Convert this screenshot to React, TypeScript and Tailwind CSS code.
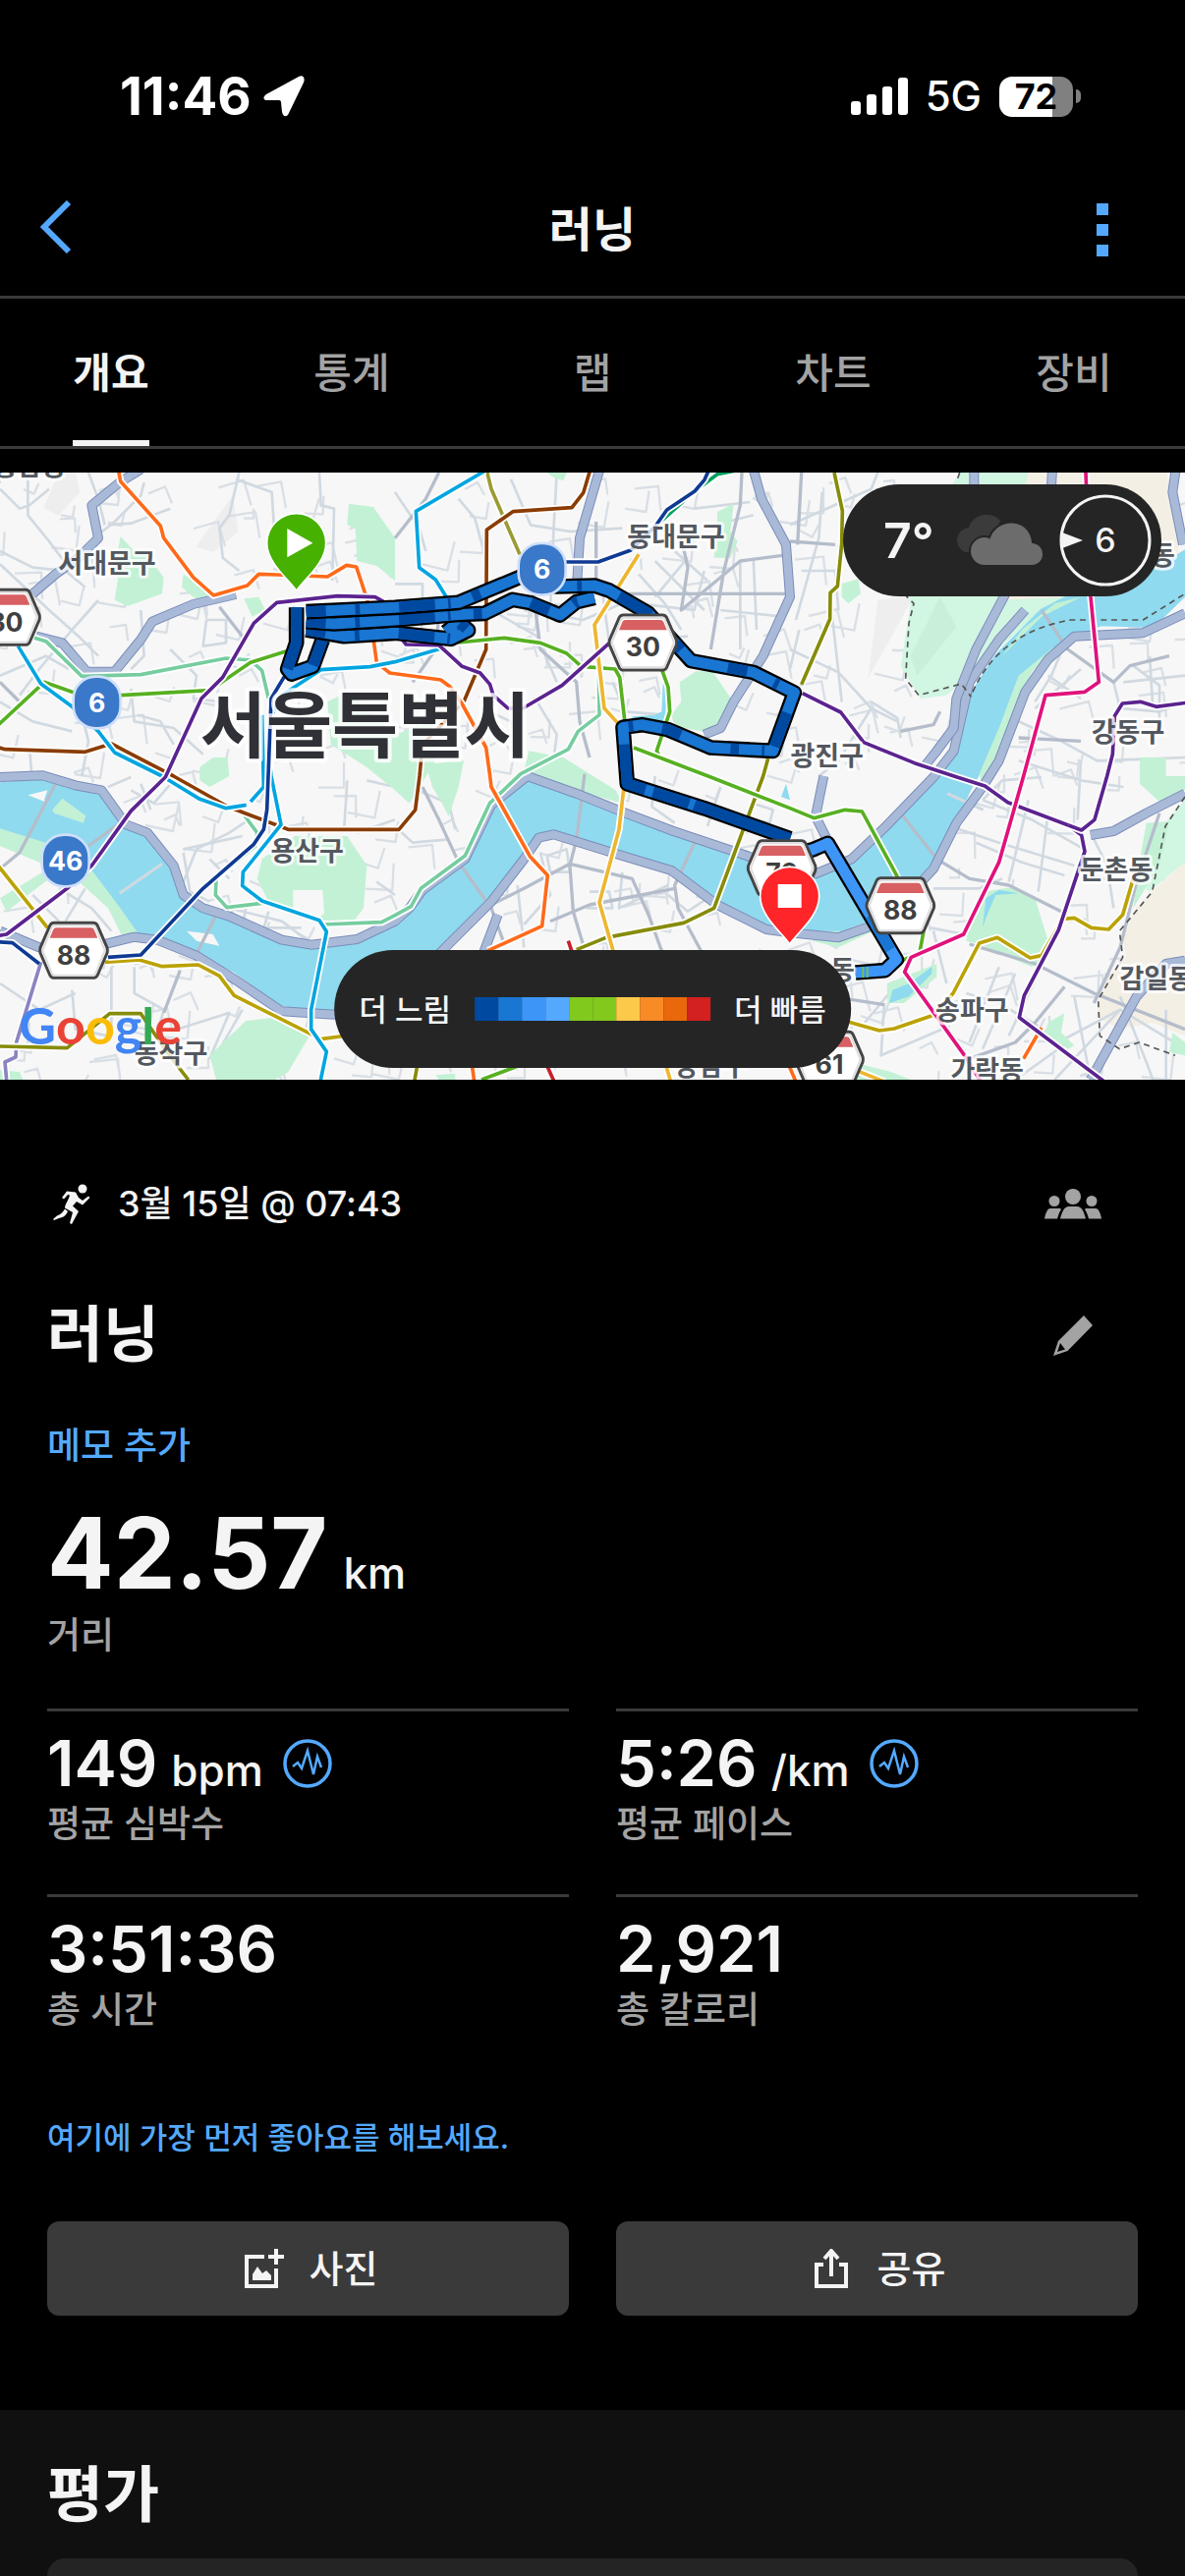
import React, { useState } from "react";

const tabs = ["개요", "통계", "랩", "차트", "장비"];

const paceColors = [
  "bg-[#0049a0]",
  "bg-[#1976d2]",
  "bg-[#3d96f7]",
  "bg-[#54a9ff]",
  "bg-[#82c91e]",
  "bg-[#82c91e]",
  "bg-[#fcc94b]",
  "bg-[#f98b26]",
  "bg-[#e9680c]",
  "bg-[#d32020]",
];

const stats = [
  { value: "149", unit: "bpm", label: "평균 심박수", chart: true },
  { value: "5:26", unit: "/km", label: "평균 페이스", chart: true },
  { value: "3:51:36", label: "총 시간" },
  { value: "2,921", label: "총 칼로리" },
];

// Map geometry. All points share the 3618 x 1854 canvas of the map's viewBox.

const river =
  "0,950 130,940 230,970 310,990 385,1085 450,1120 530,1210 560,1310 700,1370 860,1445 960,1455 1090,1435 1206,1375 1256,1330 1290,1280 1420,1180 1500,1020 1620,935 1760,985 1910,1040 2056,1100 2236,1160 2412,1215 2500,1225 2600,1190 2715,1080 2850,930 2912,850 2970,670 3040,560 3120,480 3180,420 3262,378 3500,310 3618,240 3618,375 3520,470 3360,465 3220,530 3110,620 3090,690 3050,780 3010,880 2960,970 2920,1060 2890,1130 2850,1210 2740,1320 2640,1370 2560,1400 2412,1405 2340,1390 2190,1320 2060,1220 1900,1170 1690,1105 1645,1120 1600,1180 1500,1300 1330,1470 1200,1600 1020,1645 960,1638 860,1625 720,1525 600,1465 480,1415 420,1405 365,1327 290,1227 240,1167 130,1127 0,1087";

const parks = [
  "368,195 410,240 440,240 500,320 495,370 390,408 350,390 360,325 350,290",
  "560,310 630,360 640,400 590,380 555,350",
  "745,385 790,380 810,420 770,440",
  "1065,95 1140,105 1206,200 1206,330 1150,285 1090,270 1085,170 1060,160",
  "610,900 650,870 695,870 700,927 640,960 610,940",
  "1000,700 1060,670 1100,700 1206,800 1320,760 1330,880 1250,1010 1206,970 1120,900 1010,830",
  "1300,890 1416,880 1400,960 1370,1050 1350,1010 1320,960",
  "800,1180 900,1110 1060,1110 1120,1200 1110,1330 1080,1370 960,1375 820,1310 785,1240",
  "640,1780 750,1675 830,1665 945,1720 880,1830 840,1854 660,1854",
  "160,1030 190,995 262,1048 255,1070 165,1040",
  "0,1087 130,1127 240,1167 290,1227 365,1327 420,1405 380,1430 330,1330 220,1230 120,1190 0,1140",
  "0,1300 130,1220 150,1240 20,1340",
  "2075,640 2125,607 2175,607 2232,690 2226,740 2170,795 2060,775 2050,740 2080,700",
  "2190,120 2240,95 2230,180 2252,210 2230,260 2180,260 2190,180",
  "2570,340 2620,325 2628,370 2590,400 2570,380",
  "1670,0 1730,0 1720,25 1690,15",
  "1596,927 1615,850 1720,870 1880,970 1900,1010 1720,960",
  "2960,1370 3000,1280 3100,1265 3160,1300 3200,1430 3170,1510 2990,1440 2950,1430",
  "3000,1440 3170,1490 3150,1510 3010,1450",
  "2708,1560 2860,1500 2860,1540 2760,1620 2710,1620",
  "3200,1680 3250,1650 3240,1710 3280,1750 3260,1760 3190,1710",
  "3480,870 3560,870 3560,927 3618,927 3618,970 3540,1005 3480,950",
  "3500,1070 3570,1065 3540,1200 3460,1330 3470,1240",
  "3580,1710 3618,1740 3618,1780 3570,1770",
  "2480,1400 2600,1400 2700,1360 2690,1390 2560,1450 2480,1430",
  "2600,1800 2720,1830 2780,1854 2610,1854",
  "0,1825 60,1830 70,1854 0,1854",
  "1330,1840 1390,1835 1390,1854 1340,1854",
  "3120,480 3220,400 3300,380 3180,440 3060,560",
  "3110,620 3220,530 3150,610 3040,900 3000,960 2990,920 3050,780",
];

const highways = [
  "430,-10 365,30 280,100 300,200 240,260 170,310 100,370",
  "110,500 190,520 265,608 350,608 430,510 465,455 590,402 720,372",
  "0,930 130,925 230,955 310,970 385,1075 450,1100 530,1200 560,1290 620,1330 700,1355 860,1427 950,1442 1090,1425 1206,1370 1250,1330 1290,1275 1420,1180 1500,1015 1610,927 1760,980 1910,1040 2056,1095 2236,1155 2412,1215 2490,1225 2600,1180 2700,1085 2850,930 2912,850 2960,640 3050,510 3130,420",
  "0,1400 120,1450 280,1450 410,1418 480,1427 600,1475 720,1550 860,1645 1020,1655 1160,1600 1330,1480 1500,1310 1600,1180 1645,1115 1690,1105 1900,1170 2050,1215 2190,1320 2340,1395 2412,1405 2560,1420 2700,1370 2850,1210 2880,1150 2920,1070 3000,960 3050,880 3130,670 3200,570 3280,500 3490,490 3618,430",
  "1831,-10 1770,200 1762,330",
  "2300,-10 2325,80 2400,220 2412,380 2330,560 2240,700 2200,780 2150,800",
  "3070,370 2980,540 2920,690 2912,780 2860,850 2820,900",
  "2974,-10 2974,40",
  "3213,-10 3210,40",
  "3590,-10 3580,60 3612,220",
  "3618,980 3500,1040 3400,1095 3330,1107",
  "3618,1490 3560,1500 3470,1600 3330,1854",
  "1520,1350 1475,1470",
  "2515,927 2490,1050 2530,1130",
];

const arterials = [
  "0,640 50,690 60,700",
  "670,410 740,500",
  "170,950 60,1160 0,1210",
  "270,1140 380,1060",
  "660,1350 600,1470",
  "1785,920 1760,1120 1740,1200 1750,1340 1780,1440",
  "1290,960 1340,1060 1400,1190 1500,1330 1540,1440",
  "2130,1110 2060,1260 2070,1330 2140,1460",
  "1500,1320 1600,1270 1740,1195 1930,1240 1980,1350 2020,1460",
  "1680,1370 1800,1320 2060,1270",
  "3180,420 3260,540 3400,640 3450,590 3570,560",
  "2750,1040 2860,1180 2960,1240 3080,1260 3240,1340",
  "2960,1440 3160,1500 3340,1590 3618,1700",
  "3540,1040 3470,1250 3420,1450 3340,1620",
  "3250,1570 3160,1680 3100,1740 2960,1790",
  "550,1520 500,1650",
  "1206,200 1300,80 1340,0",
  "1620,300 1650,540 1760,640 1770,760 1800,870",
  "1260,640 1330,540 1340,440",
  "1820,150 1820,340",
  "1900,370 2060,370 2220,370 2400,370",
  "2080,200 2100,290 2080,420 2260,270 2412,250",
  "2265,0 2260,100 2210,300 2170,540",
  "2412,210 2550,220",
  "2447,0 2435,220",
  "3110,810 3300,820",
  "2750,790 2850,770 2870,730",
  "2540,1600 2700,1625",
];

const streets = [
  "0,50 60,110 90,100 150,50",
  "85,0 85,130 150,210 210,290",
  "0,240 100,290 200,300 260,350",
  "440,30 430,70 350,150 300,190",
  "520,110 400,155 330,160",
  "270,0 300,80 320,160",
  "730,0 700,130 670,170 680,260 730,300",
  "720,20 830,60 840,220",
  "975,0 980,100 1020,110 1015,330",
  "0,280 150,420 240,500 300,560",
  "300,390 220,480 120,600 60,680",
  "0,620 140,560 210,600",
  "430,420 440,560 400,600",
  "630,450 690,450 690,520 620,530 630,450",
  "520,540 600,620 590,690 680,700",
  "240,700 270,820 250,927",
  "0,700 100,760 220,790",
  "90,840 100,960 200,1000",
  "400,660 410,760 530,780 620,860",
  "530,830 490,760 420,740",
  "1206,340 1290,340 1290,430",
  "1206,60 1280,170 1300,240",
  "1400,80 1450,140 1480,250",
  "1560,20 1620,160 1740,180 1900,170",
  "1700,0 1690,180 1680,420",
  "1600,420 1780,450 1900,400",
  "1500,420 1640,500 1700,640",
  "1840,370 1860,520 2100,500",
  "1950,400 2120,420 2150,300",
  "2000,270 2060,330 2150,420",
  "1950,310 2030,400 2080,480",
  "2060,240 2160,330",
  "2000,380 2100,260",
  "2260,270 2260,540",
  "2300,260 2310,480",
  "2200,420 2390,440",
  "2180,160 2300,130",
  "2120,110 2290,90",
  "1870,640 1910,730 2030,740",
  "1470,720 1560,760 1590,850",
  "1640,700 1700,800 1690,880",
  "1250,960 1370,1010 1390,1090",
  "1206,1080 1260,1130 1370,1120",
  "1670,1170 1730,1150 1740,1220 1680,1220 1670,1170",
  "1650,1160 1680,1290 1600,1380",
  "1580,1260 1600,1450",
  "1800,1280 1860,1280 1870,1330 1790,1330",
  "1900,1220 1890,1330 2040,1260",
  "2040,1290 2100,1340 2160,1300",
  "2000,927 1990,1020 2060,1070",
  "2200,960 2160,1080",
  "2300,1010 2360,1030 2350,1070 2300,1060",
  "2447,300 2550,300 2560,420",
  "2412,160 2660,50 2680,0",
  "2412,540 2560,610 2660,720 2740,760",
  "2540,430 2570,700",
  "2430,450 2500,200 2510,60",
  "2660,720 2560,880 2500,927",
  "2660,700 2740,750 2750,810",
  "2412,600 2440,480",
  "3260,500 3210,620 3160,700",
  "3200,620 3300,690",
  "3400,640 3420,720 3540,730 3618,700",
  "3460,590 3540,650 3540,760",
  "3510,560 3520,720",
  "3618,620 3430,640",
  "3110,760 3240,820 3350,880 3618,870",
  "3160,720 3300,600",
  "3110,880 3300,940 3430,960",
  "3300,880 3290,1060",
  "2900,1080 3050,1130 3280,1200",
  "3000,1000 3150,1060 3310,1150",
  "2980,1130 3120,1190 3250,1230",
  "3140,1000 3080,1250",
  "3200,1040 3170,1280",
  "2850,1270 2990,1270 3060,1240",
  "2840,1390 3000,1420",
  "3000,1000 3060,940 3180,930",
  "3330,1100 3380,1200 3400,1330",
  "2640,1680 2740,1560 2850,1530",
  "2850,1400 2890,1560",
  "2950,1590 3050,1620 3170,1690",
  "3050,1510 2960,1740",
  "3100,1530 3000,1760",
  "3160,1550 3080,1720",
  "2700,1620 2690,1780 2900,1690",
  "3280,1600 3330,1854",
  "3230,1740 3420,1640",
  "3220,1854 3420,1640 3618,1760",
  "3100,1854 3260,1740",
  "3420,1600 3500,1800 3520,1854",
  "3560,1640 3560,1854",
  "220,1580 230,1700 330,1720",
  "340,1510 340,1700",
  "410,1510 410,1590 500,1640 470,1750",
  "0,1560 120,1640 230,1590",
  "540,1700 700,1650 640,1790",
  "740,1640 660,1780",
  "560,1250 600,1150 700,1100 760,1060",
  "430,950 460,1030",
  "400,970 470,1010 530,940",
  "330,960 400,930",
  "560,1150 740,1110",
  "640,1180 700,1240",
  "560,1160 580,1280 640,1310",
  "640,1340 780,1390 920,1390",
  "700,1330 860,1370 940,1430",
  "750,1330 740,1390",
  "820,1340 800,1410",
  "180,1270 280,1330 340,1400",
  "100,1290 180,1370",
  "130,1330 220,1240",
  "200,1370 260,1270",
  "1050,1100 1060,940",
  "1120,940 1206,960",
  "1206,1060 1090,1100",
  "1150,1250 1206,1290",
];

// Short dead-end lanes scattered under everything else on the map.
const lanes = Array.from({ length: 420 }, (_, i) => {
  const x = (i * 977) % 3618;
  const y = (i * 613 + ((i * i) % 97) * 7) % 1854;
  const long = 30 + ((i * 37) % 60);
  const tilt = (i * 13) % 24;
  return i % 2
    ? `M${x} ${y}l${long} ${-tilt}l${tilt} ${long}`
    : `M${x} ${y}l${-tilt} ${long}l${-long} ${-tilt}`;
}).join("");

const subway: [string, string][] = [
  ["#76cda0", "105,505 140,515 250,622 430,617 690,567 765,573 800,605 820,690"],
  ["#76cda0", "745,1045 785,1100 780,1140 660,1240 658,1290 693,1328 800,1315"],
  [
    "#76cda0",
    "985,1380 1165,1373 1206,1352 1255,1325 1285,1270 1420,1170 1495,1010 1590,920 1735,845 1765,790 1830,740 1828,610",
  ],
  ["#8a84c0", "125,1495 50,1740 48,1785 15,1800 20,1854"],
  ["#bba205", "-10,1195 145,1390"],
  ["#bba205", "320,1495 425,1488 495,1508 605,1503 670,1537 715,1597 980,1730 1060,1719"],
  [
    "#bba205",
    "2570,1672 2685,1704 2730,1698 2850,1657 2910,1590 2990,1437 3045,1420 3145,1482 3180,1475 3245,1363 3280,1360 3332,1390 3385,1395 3428,1350 3460,1240",
  ],
  ["#868c0a", "0,1752 205,1757 335,1652 430,1652 510,1770 575,1854"],
  ["#9b9b35", "1485,-10 1500,50 1587,250"],
  ["#868c0a", "2547,0 2572,117 2570,217 2557,347 2535,367 2534,447 2447,647"],
  ["#868c0a", "2345,873 2330,927 2180,1330 2088,1375 1850,1420 1760,1457"],
  ["#868c0a", "1276,1800 1265,1860"],
  [
    "#8a3c02",
    "-10,838 15,845 260,853 340,828 530,927 695,1020 880,1090 1218,1090 1268,1030 1281,927 1290,830 1416,700 1484,540 1486,175 1566,119 1746,107 1781,62 1801,-5",
  ],
  ["#00a060", "2240,-5 2190,5 2121,57 2000,165"],
  ["#0f3a93", "2163,-5 2151,22 2121,57 2036,114 2000,165 1926,237 1826,273 1720,273"],
  ["#57b021", "-10,775 135,640 220,670 370,680 640,665 765,580 875,545"],
  ["#57b021", "1400,519 1540,505 1650,520 1730,552 1775,592 1878,600 1892,625 1910,780"],
  ["#57b021", "2020,600 2040,655 2045,730 2005,850 2018,875"],
  [
    "#57b021",
    "1935,840 2170,930 2412,1025 2485,1055 2580,1030 2632,1035 2735,1225 2820,1400 2808,1465 2755,1490",
  ],
  ["#57b021", "1470,1854 1600,1805"],
  ["#eeb630", "1950,250 1815,465 1845,720 1895,775"],
  ["#eeb630", "1905,960 1890,1090 1830,1313 1872,1460 1885,1520"],
  ["#eeb630", "2030,1800 2048,1860"],
  ["#eeb630", "2600,1820 2700,1860"],
  [
    "#ff6a1a",
    "362,-5 368,27 490,163 500,200 590,320 652,375 755,345 790,310 845,312 1000,318 1058,283 1088,288 1125,400 1150,580 1190,612 1346,633 1375,655 1410,705 1484,840 1496,927 1500,960 1618,1172 1672,1230 1655,1385 1490,1460",
  ],
  ["#ff6a1a", "1440,1800 1448,1860"],
  ["#ff6a1a", "3180,1695 3125,1790"],
  ["#ff6a1a", "2400,1790 2430,1860"],
  ["#c8202c", "1735,1430 1745,1460"],
  ["#c8202c", "1665,1800 1692,1860"],
  [
    "#00a5e0",
    "1480,-5 1270,118 1280,290 1330,327 1375,400 1355,535 1206,578 1130,593 980,602 860,680 820,760 825,900 828,927 858,1075 742,1220 740,1262 800,1308 975,1367 997,1402 950,1640 950,1700 997,1768 978,1860",
  ],
  ["#00a5e0", "55,530 125,645 220,715 300,790 350,855 495,927 610,997 690,1025 752,1015"],
  ["#00a5e0", "765,1005 805,960 800,740"],
  ["#0f3a93", "870,620 828,690 815,1030 805,1090 775,1135 620,1270 430,1473 330,1480"],
  ["#0f3a93", "120,1500 38,1436 -10,1433"],
  [
    "#5b238f",
    "-10,1415 20,1410 205,1270 280,1200 400,1033 505,930 615,690 680,625 775,460 845,397 1030,377 1145,380 1200,410 1220,500 1240,525 1340,527 1411,592 1466,612 1496,647 1506,680 1551,720 1596,720 1716,650 1861,520",
  ],
  [
    "#5b238f",
    "2450,674 2567,732 2637,824 2792,887 2922,930 3007,957 3077,1007 3262,1077 3302,1107 3312,1157 3292,1217 3232,1397 3127,1597 3112,1664 3372,1860",
  ],
  ["#5b238f", "3262,1077 3302,1092 3342,1060 3380,927 3397,860 3403,743 3427,705 3482,700 3530,715 3630,702"],
  ["#e0127c", "3313,-5 3315,0 3330,380 3355,640 3312,670 3192,680 3125,927 3050,1190 2942,1410 2782,1480 2762,1525 2945,1780 2995,1860"],
];

const route = [
  "905,412 905,520 878,600 890,615 955,592 985,510",
  "935,480 1050,500 1206,490 1376,508 1430,482 1400,455 1362,487",
  "935,455 1020,462 1206,450 1390,434 1480,430 1565,388 1620,398 1710,435 1760,395 1815,382",
  "935,425 1206,412 1400,397 1590,318 1700,348 1815,345 1860,360 1980,430 2060,520 2110,575 2300,610 2425,672 2360,850 2170,840 2040,785 1960,770 1902,778 1915,950 2150,1025 2412,1118",
];
const fastRoute = "2440,1160 2480,1152 2527,1132 2737,1487 2702,1520 2612,1527";

const districts: [string, number, number][] = [
  ["서대문구", 327, 307],
  ["동대문구", 2064, 225],
  ["광진구", 2525, 893],
  ["강동구", 3444, 823],
  ["용산구", 938, 1184],
  ["둔촌동", 3408, 1242],
  ["송파구", 2968, 1672],
  ["감일동", 3530, 1575],
  ["가락동", 3014, 1854],
  ["동작구", 522, 1802],
  ["강남구", 2170, 1842],
];

const StatusBar = () => (
  <div className="flex h-[167px] items-center justify-between pl-[122px] pr-[106px] pt-[29px]">
    <div className="flex items-center gap-3">
      <span className="text-[53px] font-bold leading-none text-white">11:46</span>
      <svg viewBox="0 0 42 42" className="size-[42px]" fill="#fff">
        <path d="M36 1 3 19C-1 22 0 25 4 25H16Q18 25 18 27L19 37C20 42 24 43 26 38L41 7C43 2 40-1 36 1Z" />
      </svg>
    </div>
    <div className="flex items-center gap-[18px]">
      <svg viewBox="0 0 58 38" className="h-[38px] w-[58px]" fill="#fff">
        <rect x="0" y="24" width="10" height="14" rx="3" />
        <rect x="16" y="17" width="10" height="21" rx="3" />
        <rect x="32" y="9" width="10" height="29" rx="3" />
        <rect x="48" y="0" width="10" height="38" rx="3" />
      </svg>
      <span className="text-[42px] font-medium leading-none text-white">5G</span>
      <div className="flex items-center gap-[3px]">
        <div className="flex h-[41px] w-[75px] items-center justify-center rounded-[13px] bg-linear-to-r from-white from-72% to-[#808080] to-72% text-[36px] font-bold leading-none text-black">
          72
        </div>
        <div className="h-[14px] w-[5px] rounded-r-full bg-[#808080]" />
      </div>
    </div>
  </div>
);

const NavBar = () => (
  <header className="flex h-[137px] items-center justify-between border-b-[3px] border-[#3a3a3a] pl-10 pr-[72px]">
    <button aria-label="뒤로" className="flex w-[50px] justify-start pb-1.5">
      <svg viewBox="0 0 34 54" className="h-[54px] w-[34px]" fill="none" stroke="#54a9ff" strokeWidth="6">
        <path d="M30 2 5 27l25 25" />
      </svg>
    </button>
    <h1 className="pl-8 text-[48px] font-semibold leading-none text-[#f4f4f4]">러닝</h1>
    <button aria-label="더보기" className="flex w-[50px] flex-col items-end gap-[9px] pr-1.5">
      <span className="size-3 bg-[#54a9ff]" />
      <span className="size-3 bg-[#54a9ff]" />
      <span className="size-3 bg-[#54a9ff]" />
    </button>
  </header>
);

const TabBar = () => {
  const [active, setActive] = useState(tabs[0]);

  return (
    <nav className="flex h-[153px] justify-between border-b-[3px] border-[#3a3a3a] px-[74px]">
      {tabs.map((tab) => (
        <button
          key={tab}
          onClick={() => setActive(tab)}
          className={`w-[78px] border-b-[6px] pt-2 whitespace-nowrap text-[42px] leading-none ${
            tab === active
              ? "border-[#f4f4f4] font-semibold text-[#f4f4f4]"
              : "border-transparent font-medium text-[#a3a3a3]"
          }`}
        >
          {tab}
        </button>
      ))}
    </nav>
  );
};

const HexShield = ({ x, y, label }: { x: number; y: number; label: string }) => (
  <g transform={`translate(${x} ${y})`}>
    <path
      d="M-60-84H60Q68-84 72-77L102-8Q104 0 102 8L72 77Q68 84 60 84H-60Q-68 84-72 77L-102 8Q-104 0-102-8L-72-77Q-68-84-60-84Z"
      fill="#fff"
      stroke="#454545"
      strokeWidth="9"
    />
    <path d="M-60-76H60L66-72 95 0 66 72 60 76H-60L-66 72-95 0-66-72Z" fill="none" stroke="#dedede" strokeWidth="6" />
    <path d="M-54-69H54Q60-69 63-62L73-38H-73L-63-62Q-60-69-54-69Z" fill="#d85f62" />
    <text y="43" textAnchor="middle" fontSize="80" fontWeight="700" fill="#404040">
      {label}
    </text>
  </g>
);

const RoundShield = ({ x, y, label }: { x: number; y: number; label: string }) => (
  <g transform={`translate(${x} ${y})`}>
    <rect x="-72" y="-79" width="144" height="158" rx="68" fill="#3a78c9" stroke="#cfdffb" strokeWidth="8" />
    <text y="29" textAnchor="middle" fontSize="80" fontWeight="700" fill="#fff">
      {label}
    </text>
  </g>
);

const Pin = ({ x, y, color, children }: { x: number; y: number; color: string; children: React.ReactNode }) => (
  <g transform={`translate(${x} ${y})`}>
    <path
      d="M0 146C-20 114-90 62-90 0A90 90 0 0 1 90 0C90 62 20 114 0 146Z"
      fill={color}
      stroke="#fff"
      strokeWidth="5"
    />
    {children}
  </g>
);

const MapDrawing = () => (
  <svg viewBox="0 0 3618 1854" className="block w-full" fill="none" strokeLinejoin="round">
    <rect width="3618" height="1854" fill="#f7f7f7" />
    <path
      d="M180 0h50l14 60-66 72-45-25ZM710 70l18 110-75 62-55-14ZM2680 390l60-10 60-20-150 270Z"
      fill="#eeeeee"
    />
    <path d={lanes} stroke="#d9dfe5" strokeWidth="7" />
    <path
      d="M2930 0h370l0 60 100 300-210 50-220 200-80 70-80 10-60-100 30-190-20-90 100-200Z"
      fill="#d1f6e2"
    />
    <path d="m2870 380 50 90-120 150-20-60Z" fill="#c9eed9" />
    <path d="M3140 0h420l20 60 20 200-150 110-400 20Z" fill="#f4efe4" />
    <path d="m3618 1190-90 80-60 60-40 90 10 60-70 80-20 100 70 40 100-20 100 40Z" fill="#f4efe4" />
    <path d="m3618 1000-70 80-60 180 20 20 110-90Z" fill="#d1f6e2" />
    {streets.map((points) => (
      <polyline key={points} points={points} stroke="#d1d9e1" strokeWidth="8" />
    ))}
    <polygon points={river} fill="#8fdaee" stroke="#8fdaee" strokeWidth="8" />
    {parks.map((points) => (
      <polygon key={points} points={points} fill="#c3f1d5" />
    ))}
    <path d="M895 1275h90l5 70-30 30-65-45Z" fill="#f7f7f7" />
    <path d="m85 985 60-15-10 30 15 10ZM570 1400l80 10 20 35-70-15Z" fill="#f7f7f7" />
    <path
      d="m1930 745 70-5 20-10 5-110 20 20-20 140-90 5ZM3000 1390l10-90 40-25 60 10-70 5-30 70ZM2725 1580l50-20 70-50 0 20-70 70-60 20ZM2385 990l15-40 12 50Z"
      fill="#8fdaee"
    />
    {arterials.map((points) => (
      <polyline key={points} points={points} stroke="#b5bdcb" strokeWidth="10" />
    ))}
    <path d="M495 1195 365 1285M740 1010l-60 20M2892 980l110 50" stroke="#d1d9e1" strokeWidth="9" />
    {highways.map((points) => (
      <g key={points}>
        <polyline points={points} stroke="#7b8cba" strokeWidth="30" />
        <polyline points={points} stroke="#a9bad8" strokeWidth="24" />
      </g>
    ))}
    <path
      d="M2970 670c60-140 180-200 300-220h220l128-80M2930 0l-10 30M2760 370l30 30-15 60-10 170 40 50 130-35 30 40M3618 990l-60 90-40 200-100 120 10 80-75 130 5 110 60 40 60-20 110 40"
      stroke="#555"
      strokeWidth="5"
      strokeDasharray="18 14"
    />
    {subway.map(([color, points]) => (
      <g key={points}>
        <polyline points={points} stroke="#fff" strokeWidth="22" />
        <polyline points={points} stroke={color} strokeWidth="11" />
      </g>
    ))}

    {/* Translucent halo so lines fade behind the place names. */}
    <g textAnchor="middle" stroke="#fff" strokeOpacity="0.8" paintOrder="stroke">
      <g fontSize="81" fontWeight="600" fill="#53585e" strokeWidth="18">
        {districts.map(([name, x, y]) => (
          <text key={name} x={x} y={y}>
            {name}
          </text>
        ))}
        <text x="3550" y="282">동</text>
        <text x="90" y="10">홍남동</text>
      </g>
      <text x="1115" y="852" fontSize="219" fontWeight="700" fill="#2f3136" strokeWidth="24">
        서울특별시
      </text>
    </g>

    <HexShield x={18} y={442} label="30" />
    <HexShield x={225} y={1459} label="88" />
    <HexShield x={2532} y={1792} label="61" />
    <RoundShield x={296} y={702} label="6" />
    <RoundShield x={200} y={1185} label="46" />

    {route.map((points) => (
      <g key={points}>
        <polyline points={points} stroke="#000" strokeWidth="47" />
        <polyline points={points} stroke="#1976d2" strokeWidth="33" />
        <polyline
          points={points}
          stroke="#0049a0"
          strokeWidth="33"
          strokeDasharray="60 90 14 120 110 40 8 70 26 160"
        />
      </g>
    ))}
    <polyline points="905,412 905,520 878,600" stroke="#0049a0" strokeWidth="33" />
    <polyline points="1906,830 1915,950 2150,1025 2412,1118" stroke="#0049a0" strokeWidth="33" />
    <path d="m1970 969 24 7M2104 1010l16 6" stroke="#1976d2" strokeWidth="33" />
    <polyline points={fastRoute} stroke="#000" strokeWidth="47" />
    <polyline points={fastRoute} stroke="#3d96f7" strokeWidth="33" />
    <path d="m2657 1352 62 105" stroke="#1976d2" strokeWidth="33" />
    <path d="M2635 1510v33M2648 1509v33" stroke="#82c91e" strokeWidth="5" />
    <text
      x="2572"
      y="1548"
      textAnchor="middle"
      fontSize="81"
      fontWeight="600"
      fill="#53585e"
      stroke="#fff"
      strokeOpacity="0.6"
      strokeWidth="14"
      paintOrder="stroke"
    >
      동
    </text>

    <HexShield x={1963} y={519} label="30" />
    <HexShield x={2387} y={1208} label="70" />
    <HexShield x={2749} y={1322} label="88" />
    <RoundShield x={1655} y={295} label="6" />

    <Pin x={905} y={215} color="#46b100">
      <path d="M-28-44 50 0l-78 44Z" fill="#fff" />
    </Pin>
    <Pin x={2411} y={1294} color="#ff2529">
      <path d="M-36-37h72v72h-72Z" fill="#fff" />
    </Pin>

    <text x="58" y="1745" fontSize="156" fontFamily="Lato, sans-serif" fontWeight="700">
      <tspan fill="#4285f4">G</tspan>
      <tspan fill="#ea4335">o</tspan>
      <tspan fill="#fbbc05">o</tspan>
      <tspan fill="#4285f4">g</tspan>
      <tspan fill="#34a853">l</tspan>
      <tspan fill="#ea4335">e</tspan>
    </text>
  </svg>
);

const WeatherBadge = () => (
  <div className="absolute right-[24px] top-[12px] flex h-[114px] items-center rounded-full bg-[#252525] pl-[41px] pr-[10px] text-[#f4f4f4]">
    <span className="w-[69px] text-[50px] font-semibold leading-none">7°</span>
    <svg viewBox="0 0 94 53" className="h-[53px] w-[94px]">
      <path d="M14 38a13 13 0 0 1 4-25C22-2 42-4 50 6L38 38Z" fill="#3b3b3b" />
      <path
        d="M34 52a15 15 0 0 1 0-30c2 0 4 0 5 1 7-21 41-22 44 5a12 12 0 0 1-2 24Z"
        fill="#6c6c6c"
        stroke="#252525"
        strokeWidth="2"
      />
    </svg>
    <div className="ml-[16px] flex size-[94px] items-center justify-center">
      <svg viewBox="0 0 94 94" className="absolute size-[94px]">
        <circle cx="47" cy="47" r="45" fill="none" stroke="#f4f4f4" strokeWidth="3" />
        <path d="M3 39 24 47 3 55Z" fill="#f4f4f4" />
      </svg>
      <span className="text-[34px] font-medium leading-none">6</span>
    </div>
  </div>
);

const PaceLegend = () => (
  <div className="absolute bottom-[12px] left-1/2 flex h-[120px] -translate-x-1/2 items-center gap-[24px] whitespace-nowrap rounded-full bg-[#252525] px-[25px] text-[31px] font-medium leading-none text-[#f4f4f4]">
    <span>더 느림</span>
    <div className="flex">
      {paceColors.map((color, i) => (
        <span key={i} className={`h-6 w-6 ${color}`} />
      ))}
    </div>
    <span>더 빠름</span>
  </div>
);

const ActivityMap = () => (
  <section className="relative mt-6 overflow-hidden">
    <MapDrawing />
    <WeatherBadge />
    <PaceLegend />
  </section>
);

const RunnerIcon = () => (
  <svg viewBox="0 0 40 42" className="h-[42px] w-[40px]" fill="#f4f4f4">
    <circle cx="30" cy="6" r="4.500" />
    <path d="M9 15 14 8.500 23 9.500 26 15 30 18 36 13.500 37.500 15 30 22.500 24 19 20 23.500 26 29 19 42 17 41 20 30 12 25.500C12 22 16 17 17 12.500L15 12 11 16.500Z" />
    <path d="M12 26.500 15 29C13 33 11 35 6 36L1 38 0 37 4 33.500C8 32 10 30 12 26.500Z" />
  </svg>
);

const PeopleIcon = () => (
  <svg viewBox="0 0 58 31" className="h-[31px] w-[58px]" fill="#a3a3a3">
    <circle cx="29" cy="8" r="8" />
    <circle cx="10" cy="12.500" r="5.500" />
    <circle cx="48" cy="12.500" r="5.500" />
    <path d="M16 30.500C18 23 20 18 25 18h8c5 0 7 5 9 12.500ZM0 30.500C1 25 3 20 6 20h10l1 1c-2 3-3 6-4 9.500ZM58 30.500C57 25 55 20 52 20H42l-1 1c2 3 3 6 4 9.500Z" />
  </svg>
);

const PencilIcon = () => (
  <svg viewBox="0 0 40 41" className="h-[41px] w-[40px]" fill="#a3a3a3">
    <path fillRule="evenodd" d="M31 0 40 10 14.500 36 0 41 5 26ZM7 28 4 37 12 34.500Z" />
  </svg>
);

const ChartIcon = () => (
  <svg viewBox="0 0 50 50" className="size-[50px]" fill="none" stroke="#54a9ff">
    <circle cx="25" cy="25" r="23" strokeWidth="3.500" />
    <path d="m10 28 5-4 4 6 6-18 6 24 4-18 4 11" strokeWidth="2.500" />
  </svg>
);

const PhotoIcon = () => (
  <svg viewBox="0 0 40 40" className="size-10" fill="none" stroke="#f4f4f4" strokeWidth="4">
    <path d="M20 8H2v30h30V20" />
    <path d="M32 0v16M24 8h16" />
    <path d="m8 32V26l5-8 5 7 4-3 5 5v5Z" fill="#f4f4f4" stroke="none" />
  </svg>
);

const ShareIcon = () => (
  <svg viewBox="0 0 34 40" className="h-10 w-[34px]" fill="none" stroke="#f4f4f4" strokeWidth="4">
    <path d="M9 16H2v22h30V16h-7" />
    <path d="M17 28V5" />
    <path d="m10 10 7-8 7 8" />
  </svg>
);

const StatCell = ({ value, unit, label, chart }: (typeof stats)[number]) => (
  <div className="h-[189px] border-t-[3px] border-[#3a3a3a] pt-[21px]">
    <div className="flex h-16 items-center gap-[20px]">
      <p className="text-[65px] font-semibold leading-[64px] text-[#f4f4f4]">
        {value}
        {unit && <span className="pl-[14px] text-[44px] font-medium leading-none">{unit}</span>}
      </p>
      {chart && (
        <button aria-label={`${label} 차트`}>
          <ChartIcon />
        </button>
      )}
    </div>
    <p className="text-[37px] font-medium leading-[60px] text-[#a3a3a3]">{label}</p>
  </div>
);

const Summary = () => (
  <main className="px-12 pt-[66px]">
    <div className="flex h-[120px] items-center justify-between pl-1.5 pr-[37px]">
      <div className="flex items-center gap-[26px]">
        <RunnerIcon />
        <p className="text-[36px] font-medium leading-none text-[#f4f4f4]">3월 15일 @ 07:43</p>
      </div>
      <button aria-label="공개 설정">
        <PeopleIcon />
      </button>
    </div>
    <div className="mt-4 flex h-[116px] items-center justify-between pr-[46px]">
      <h2 className="text-[62px] font-semibold leading-none text-[#f4f4f4]">러닝</h2>
      <button aria-label="이름 편집">
        <PencilIcon />
      </button>
    </div>
    <button className="mt-[27px] block text-[37px] font-medium leading-[56px] text-[#54a9ff]">메모 추가</button>

    <p className="mt-[33px] text-[100px] font-bold leading-[96px] text-[#f4f4f4]">
      42.57<span className="pl-4 text-[44px] font-medium leading-none">km</span>
    </p>
    <p className="mt-2 text-[37px] font-medium leading-[56px] text-[#a3a3a3]">거리</p>

    <div className="mt-[46px] grid grid-cols-2 gap-x-12">
      {stats.map((stat) => (
        <StatCell key={stat.label} {...stat} />
      ))}
    </div>

    <button className="mt-[35px] block text-[31px] font-medium leading-[48px] text-[#54a9ff]">
      여기에 가장 먼저 좋아요를 해보세요.
    </button>

    <div className="mt-[61px] grid grid-cols-2 gap-x-12 text-[38px] font-medium leading-none text-[#f4f4f4]">
      <button className="flex h-24 items-center justify-center gap-[26px] rounded-xl bg-[#3a3a3a] pl-1.5">
        <PhotoIcon />
        사진
      </button>
      <button className="flex h-24 items-center justify-center gap-[30px] rounded-xl bg-[#3a3a3a] pl-1.5">
        <ShareIcon />
        공유
      </button>
    </div>
  </main>
);

const Evaluation = () => (
  <section className="mt-24 bg-[#101010] px-12 pt-[51px]">
    <h2 className="text-[62px] font-semibold leading-[72px] text-[#f4f4f4]">평가</h2>
    <div className="mt-7 h-[18px] rounded-t-3xl bg-[#242424]" />
  </section>
);

const App = () => (
  <div className="min-h-screen overflow-hidden bg-black font-['Inter','Noto_Sans_CJK_KR',sans-serif]">
    <StatusBar />
    <NavBar />
    <TabBar />
    <ActivityMap />
    <Summary />
    <Evaluation />
  </div>
);

export default App;
